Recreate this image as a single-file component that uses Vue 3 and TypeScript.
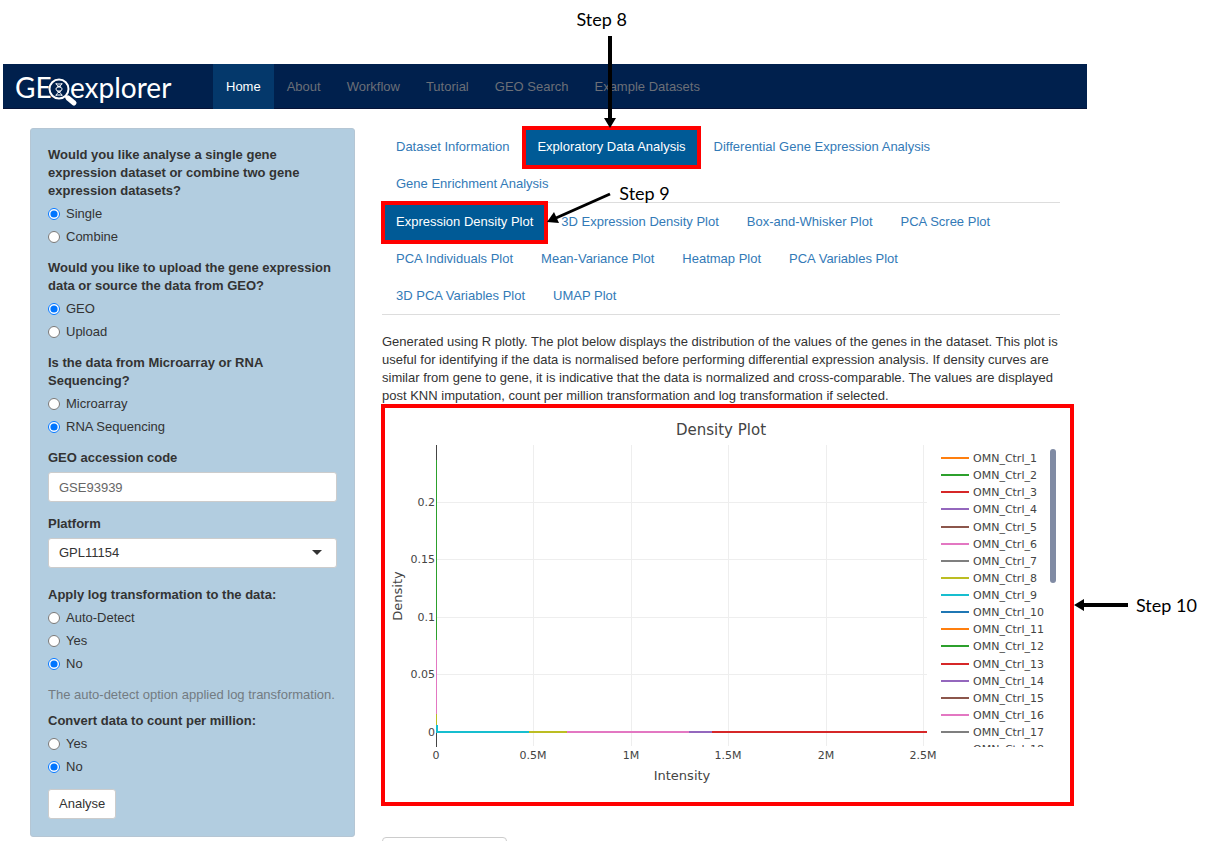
<script setup lang="ts">
import { ref } from 'vue'

interface RadioGroup {
  id: string
  label: string
  options: string[]
}
interface Tab {
  text: string
  step?: number
}

const navItems = ['Home', 'About', 'Workflow', 'Tutorial', 'GEO Search', 'Example Datasets']

const sourceGroups: RadioGroup[] = [
  {
    id: 'analysis',
    label: 'Would you like analyse a single gene expression dataset or combine two gene expression datasets?',
    options: ['Single', 'Combine'],
  },
  {
    id: 'source',
    label: 'Would you like to upload the gene expression data or source the data from GEO?',
    options: ['GEO', 'Upload'],
  },
  {
    id: 'technology',
    label: 'Is the data from Microarray or RNA Sequencing?',
    options: ['Microarray', 'RNA Sequencing'],
  },
]
const logGroup: RadioGroup = {
  id: 'log',
  label: 'Apply log transformation to the data:',
  options: ['Auto-Detect', 'Yes', 'No'],
}
const cpmGroup: RadioGroup = {
  id: 'cpm',
  label: 'Convert data to count per million:',
  options: ['Yes', 'No'],
}
const answers = ref<Record<string, string>>({
  analysis: 'Single',
  source: 'GEO',
  technology: 'RNA Sequencing',
  log: 'No',
  cpm: 'No',
})
const accession = ref('GSE93939')
const platform = ref('GPL11154')

const mainTabs: Tab[] = [
  { text: 'Dataset Information' },
  { text: 'Exploratory Data Analysis', step: 8 },
  { text: 'Differential Gene Expression Analysis' },
  { text: 'Gene Enrichment Analysis' },
]
const plotTabs: Tab[] = [
  { text: 'Expression Density Plot', step: 9 },
  { text: '3D Expression Density Plot' },
  { text: 'Box-and-Whisker Plot' },
  { text: 'PCA Scree Plot' },
  { text: 'PCA Individuals Plot' },
  { text: 'Mean-Variance Plot' },
  { text: 'Heatmap Plot' },
  { text: 'PCA Variables Plot' },
  { text: '3D PCA Variables Plot' },
  { text: 'UMAP Plot' },
]

const xTicks = ['0', '0.5M', '1M', '1.5M', '2M', '2.5M'].map((text, i) => ({
  text,
  x: 51 + Math.round((i * 487) / 5),
}))
const yTicks = ['0', '0.05', '0.1', '0.15', '0.2'].map((text, i) => ({
  text,
  y: 324 - Math.round((i * 230) / 4),
}))

const palette = ['#ff7f0e', '#2ca02c', '#d62728', '#9467bd', '#8c564b', '#e377c2', '#7f7f7f', '#bcbd22', '#17becf', '#1f77b4']
const legend = Array.from({ length: 18 }, (_, i) => ({
  name: `OMN_Ctrl_${i + 1}`,
  color: palette[i % palette.length],
  y: 50 + Math.round((i * 274) / 16),
}))
</script>

<template>
  <div class="page">
    <header class="navbar">
      <a class="brand" href="#" aria-label="GEOexplorer">
        <svg width="170" height="45" viewBox="0 0 170 45">
          <text x="12" y="34">GE</text>
          <text x="67" y="34">explorer</text>
          <circle cx="56" cy="25" r="9.5" />
          <path class="neck" d="M62 32l4 4" />
          <path class="handle" d="M65 34l6 5" />
          <path class="dna" d="M53 19c0 4 6 3 6 6s-6 3-6 7M59 19c0 4-6 3-6 6s6 3 6 7M53 20h6M54 23h4M54 27h4M53 31h6" />
        </svg>
      </a>
      <nav>
        <ul class="nav-list">
          <li v-for="(item, i) in navItems" :key="item">
            <a href="#" class="nav-link" :class="{ active: i === 0 }">{{ item }}</a>
          </li>
        </ul>
      </nav>
    </header>

    <div class="columns">
      <form class="sidebar" @submit.prevent>
        <fieldset v-for="group in sourceGroups" :key="group.id" class="group">
          <legend class="label">{{ group.label }}</legend>
          <label v-for="option in group.options" :key="option" class="radio">
            <input v-model="answers[group.id]" type="radio" :name="group.id" :value="option" />{{ option }}
          </label>
        </fieldset>

        <div class="group">
          <label class="label" for="accession">GEO accession code</label>
          <input id="accession" v-model="accession" class="control muted" type="text" />
        </div>

        <div class="group platform">
          <label class="label" for="platform">Platform</label>
          <div class="select-wrap">
            <select id="platform" v-model="platform" class="control">
              <option>GPL11154</option>
            </select>
            <svg class="caret" width="10" height="5" viewBox="0 0 10 5"><path d="M0 0h10L5 5z" fill="#333" /></svg>
          </div>
        </div>

        <fieldset class="group">
          <legend class="label">{{ logGroup.label }}</legend>
          <label v-for="option in logGroup.options" :key="option" class="radio">
            <input v-model="answers.log" type="radio" name="log" :value="option" />{{ option }}
          </label>
        </fieldset>
        <p class="help">The auto-detect option applied log transformation.</p>
        <fieldset class="group">
          <legend class="label">{{ cpmGroup.label }}</legend>
          <label v-for="option in cpmGroup.options" :key="option" class="radio">
            <input v-model="answers.cpm" type="radio" name="cpm" :value="option" />{{ option }}
          </label>
        </fieldset>
        <button class="analyse" type="submit">Analyse</button>
      </form>

      <main class="content">
        <ul v-for="(tabs, row) in [mainTabs, plotTabs]" :key="row" class="tabs">
          <li v-for="tab in tabs" :key="tab.text" :class="{ marked: tab.step }">
            <a href="#" class="tab">{{ tab.text }}</a>
            <template v-if="tab.step === 8">
              <span class="note note-8">Step 8</span>
              <svg class="arrow arrow-8" width="12" height="92" viewBox="0 0 12 92">
                <path d="M4 0h4v82h4L6 92 0 82h4z" />
              </svg>
            </template>
            <template v-if="tab.step === 9">
              <span class="note note-9">Step 9</span>
              <svg class="arrow arrow-9" width="66" height="34" viewBox="0 0 66 34">
                <path d="M63 3L9 27" stroke="#000" stroke-width="3" />
                <path d="M0 31L7 21L12 32z" />
              </svg>
            </template>
          </li>
        </ul>

        <p class="intro">
          Generated using R plotly. The plot below displays the distribution of the values of the genes in the dataset. This plot is
          useful for identifying if the data is normalised before performing differential expression analysis. If density curves are
          similar from gene to gene, it is indicative that the data is normalized and cross-comparable. The values are displayed
          post KNN imputation, count per million transformation and log transformation if selected.
        </p>

        <figure class="plot">
          <svg class="chart" viewBox="0 0 685 394">
            <text class="title" x="336" y="27">Density Plot</text>
            <g class="grid">
              <path v-for="t in xTicks.slice(1)" :key="t.text" :d="`M${t.x} 37V338`" />
              <path v-for="t in yTicks.slice(1)" :key="t.text" :d="`M51 ${t.y}H542`" />
            </g>
            <g class="tick">
              <text v-for="t in xTicks" :key="t.text" :x="t.x" y="351" text-anchor="middle">{{ t.text }}</text>
              <text v-for="t in yTicks" :key="t.text" x="50" :y="t.y + 4" text-anchor="end">{{ t.text }}</text>
            </g>
            <g shape-rendering="crispEdges">
              <rect x="51" y="37" width="1" height="302" fill="#444" />
              <rect x="51" y="52" width="1" height="180" fill="#2ca02c" />
              <rect x="51" y="232" width="1" height="74" fill="#e377c2" />
              <rect x="51" y="306" width="1" height="11" fill="#bcbd22" />
              <rect x="51" y="317" width="2" height="8" fill="#17becf" />
              <rect x="51" y="323" width="93" height="2" fill="#17becf" />
              <rect x="144" y="323" width="38" height="2" fill="#bcbd22" />
              <rect x="182" y="323" width="122" height="2" fill="#e377c2" />
              <rect x="304" y="323" width="23" height="2" fill="#9467bd" />
              <rect x="327" y="323" width="215" height="2" fill="#d62728" />
            </g>
            <text class="axis" x="297" y="372">Intensity</text>
            <text class="axis" transform="translate(17 188) rotate(-90)">Density</text>
            <clipPath id="legend-clip"><rect x="550" y="37" width="115" height="302" /></clipPath>
            <g clip-path="url(#legend-clip)" class="tick">
              <g v-for="item in legend" :key="item.name">
                <path :d="`M556 ${item.y}h28`" :stroke="item.color" stroke-width="2" />
                <text x="588" :y="item.y + 4">{{ item.name }}</text>
              </g>
            </g>
            <rect x="665" y="41" width="6" height="134" rx="3" fill="#808ba4" />
          </svg>
          <svg class="arrow arrow-10" width="54" height="12" viewBox="0 0 54 12">
            <path d="M0 6L10 0v4h44v4H10v4z" />
          </svg>
          <figcaption class="note note-10">Step 10</figcaption>
        </figure>
        <button class="more" type="button"></button>
      </main>
    </div>
  </div>
</template>

<style>
body {
  margin: 0;
  background: #fff;
}
</style>

<style scoped>
.page {
  box-sizing: border-box;
  height: 100vh;
  overflow: hidden;
  padding: 64px 125px 0 3px;
  color: #333;
  font: 13px/18px "Liberation Sans", Arial, sans-serif;
}
.navbar {
  display: flex;
  height: 44px;
  background: #00204d;
  border-bottom: 1px solid #061337;
}
.brand {
  width: 210px;
}
.brand text {
  fill: #fff;
  font: 28px Lato, sans-serif;
}
.brand circle,
.brand path {
  fill: none;
  stroke: #fff;
  stroke-width: 2;
}
.brand circle {
  fill: #00204d;
}
.brand .handle {
  stroke-width: 5;
  stroke-linecap: round;
}
.brand .dna {
  stroke-width: 1;
}
.nav-list,
.tabs {
  display: flex;
  margin: 0;
  padding: 0;
  list-style: none;
}
.nav-link {
  display: block;
  padding: 0 13px;
  color: #6b6f77;
  line-height: 45px;
  text-decoration: none;
}
.nav-link.active {
  background: #04386b;
  color: #fff;
}
.columns {
  display: grid;
  grid-template-columns: 325px 1fr;
  gap: 27px;
  align-items: start;
  padding: 19px 27px 0;
}
.sidebar {
  padding: 17px;
  border: 1px solid #b5c6d4;
  border-radius: 3px;
  background: #b2cde0;
}
.group {
  margin: 0 0 13px;
  padding: 0;
  border: 0;
  min-width: 0;
}
.platform {
  margin-bottom: 18px;
}
.label {
  display: block;
  margin-bottom: 5px;
  padding: 0;
  font-weight: bold;
}
.radio {
  display: flex;
  align-items: center;
  gap: 6px;
}
.radio + .radio {
  margin-top: 5px;
}
.radio input {
  width: 12px;
  height: 12px;
  margin: 0;
}
.control {
  display: block;
  box-sizing: border-box;
  width: 100%;
  height: 30px;
  padding: 0 10px;
  border: 1px solid #ccc;
  border-radius: 3px;
  background: #fff;
  color: #333;
  font: inherit;
  appearance: none;
}
.control.muted {
  color: #666;
}
.select-wrap {
  position: relative;
}
.caret {
  position: absolute;
  top: 12px;
  right: 15px;
}
.help {
  margin: 0 0 8px;
  color: #737b82;
}
.analyse {
  display: block;
  height: 30px;
  padding: 0 10px;
  border: 1px solid #ccc;
  border-radius: 3px;
  background: #fff;
  color: #333;
  font: inherit;
}
.content {
  min-width: 0;
}
.tabs {
  flex-wrap: wrap;
  border-bottom: 1px solid #ddd;
}
.tabs li {
  position: relative;
}
.tab {
  display: block;
  padding: 0 14px;
  color: #337ab7;
  line-height: 37px;
  text-decoration: none;
}
.marked {
  z-index: 1;
}
.marked .tab {
  background: #005a96;
  color: #fff;
}
.marked .tab::after {
  content: "";
  position: absolute;
  inset: -2px -1px -4px;
  border: 4px solid #f00;
  background: none;
}
.note {
  position: absolute;
  color: #000;
  font: 18px/24px Lato, sans-serif;
  white-space: nowrap;
}
.arrow {
  position: absolute;
}
.note-8 {
  bottom: 134px;
  left: 53px;
}
.arrow-8 {
  bottom: 37px;
  left: 81px;
}
.note-9 {
  top: -22px;
  left: calc(100% + 72px);
}
.arrow-9 {
  top: -12px;
  left: 100%;
}
.arrow-10 {
  top: 191px;
  left: calc(100% + 4px);
}
.note-10 {
  top: 185px;
  left: calc(100% + 66px);
}
.intro {
  margin: 18px 0 0;
}
.plot {
  position: relative;
  margin: -1px -14px 0 -1px;
  border: 4px solid #f00;
}
.chart {
  display: block;
  width: 100%;
  font-family: "DejaVu Sans", Verdana, sans-serif;
  fill: #444;
}
.title {
  font-size: 15px;
  text-anchor: middle;
}
.axis {
  font-size: 13px;
  text-anchor: middle;
}
.tick {
  font-size: 11px;
}
.grid {
  stroke: #eee;
  shape-rendering: crispEdges;
}
.more {
  display: block;
  width: 125px;
  height: 30px;
  margin-top: 31px;
  border: 1px solid #ccc;
  border-radius: 4px;
  background: #fff;
}
</style>
